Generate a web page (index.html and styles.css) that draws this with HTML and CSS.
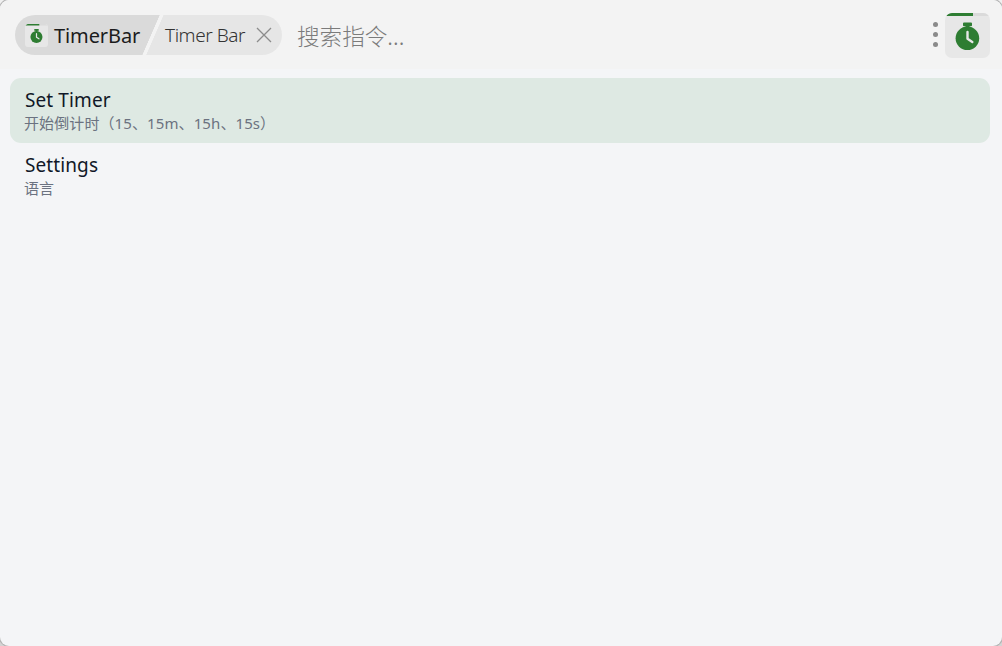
FILE: index.html
```
<!DOCTYPE html>
<html lang="zh-CN">
<head>
    <meta charset="UTF-8">
    <meta name="viewport" content="width=device-width, initial-scale=1.0">
    <title>TimerBar</title>
    <link rel="stylesheet" href="styles.css">
</head>
<body>
    <!-- 计时器图标 -->
    <svg class="sprite">
        <symbol id="timer" viewBox="0 0 45 45">
            <path fill="#dadada" d="M27 0h14a6 6 0 0 1 4 3H27z"/>
            <path fill="#2e7d32" d="M5 0h23v3H1a6 6 0 0 1 4-3zM19 9.6h7a1 1 0 0 1 1 1v1.6a1 1 0 0 1-1 1h-1.5v2h-4v-2H19a1 1 0 0 1-1-1v-1.6a1 1 0 0 1 1-1z"/>
            <circle fill="#2e7d32" cx="22.4" cy="25.3" r="11.8"/>
            <path fill="none" stroke="#e7e7e7" stroke-width="2.4" stroke-linecap="round" stroke-linejoin="round" d="M22.5 19v6.8l4.8 3.2"/>
        </symbol>
    </svg>

    <div class="window">
        <!-- 搜索栏 -->
        <div class="header">
            <div class="tag">
                <div class="tag-plugin">
                    <svg class="tag-icon"><use href="#timer"/></svg>
                    <span class="tag-name">TimerBar</span>
                </div>
                <div class="tag-feature">
                    <span class="tag-label">Timer Bar</span>
                    <svg class="close" viewBox="0 0 16 16"><path d="M1 1l14 14M15 1L1 15"/></svg>
                </div>
            </div>
            <div class="search">搜索指令...</div>
            <div class="dots"><i></i><i></i><i></i></div>
            <svg class="logo"><use href="#timer"/></svg>
        </div>

        <!-- 指令列表 -->
        <div class="list">
            <div class="item active">
                <div class="title">Set Timer</div>
                <div class="desc">开始倒计时（15、15m、15h、15s）</div>
            </div>
            <div class="item">
                <div class="title">Settings</div>
                <div class="desc">语言</div>
            </div>
        </div>
    </div>
</body>
</html>
```

FILE: styles.css
```
* { box-sizing: border-box; }
body { margin: 0; background: linear-gradient(#f0f0f0, #d4d4d4); font-family: "Noto Sans", "Noto Sans CJK SC", sans-serif; }
.sprite { display: none; }
.window { height: 646px; background: #f4f5f7; border-radius: 9px; overflow: hidden; box-shadow: 0 0 0 1px #b4b4b4; }
.header { display: flex; align-items: center; height: 69px; padding: 1px 12px 0 15px; background: #f3f3f3; }

.tag { display: flex; width: 267px; height: 40px; border-radius: 20px; overflow: hidden; background: linear-gradient(113.5deg, #dadada 0 132.5px, #f3f3f3 133px 136px, #e6e6e6 136.5px); }
.tag-plugin { display: flex; align-items: center; width: 150px; padding-left: 10px; }
.tag-icon { width: 23px; height: 23px; margin-right: 6px; border-radius: 3px; background: #e7e7e7; }
.tag-name { padding-top: 1px; font-size: 20px; line-height: 40px; letter-spacing: -0.1px; color: #1c1c1c; white-space: nowrap; }
.tag-feature { display: flex; align-items: center; }
.tag-label { width: 91px; font-size: 19px; font-weight: 300; line-height: 40px; letter-spacing: -0.45px; color: #333; white-space: nowrap; }
.close { width: 16px; height: 16px; fill: none; stroke: #8c8c8c; stroke-width: 1.3; }

.search { flex: 1; margin-left: 15px; padding-top: 2px; font-size: 22.6px; font-weight: 300; line-height: 40px; color: #7b7b7b; font-family: "Noto Sans CJK SC", sans-serif; }
.dots { display: flex; flex-direction: column; gap: 5px; margin: 0 7px 1px 0; }
.dots i { width: 5px; height: 5px; border-radius: 50%; background: #8a8a8a; }
.logo { width: 45px; height: 45px; border-radius: 7px; background: #e7e7e7; }

.list { padding: 9px 12px 0 10px; }
.item { height: 65px; padding: 9px 15px; border-radius: 11px; }
.active { background: #dee9e3; }
.title { font-size: 19px; line-height: 26px; letter-spacing: 0.1px; color: #111827; }
.desc { margin-left: -1px; font-size: 15px; line-height: 21px; letter-spacing: 0.1px; color: #6b7280; }
```
